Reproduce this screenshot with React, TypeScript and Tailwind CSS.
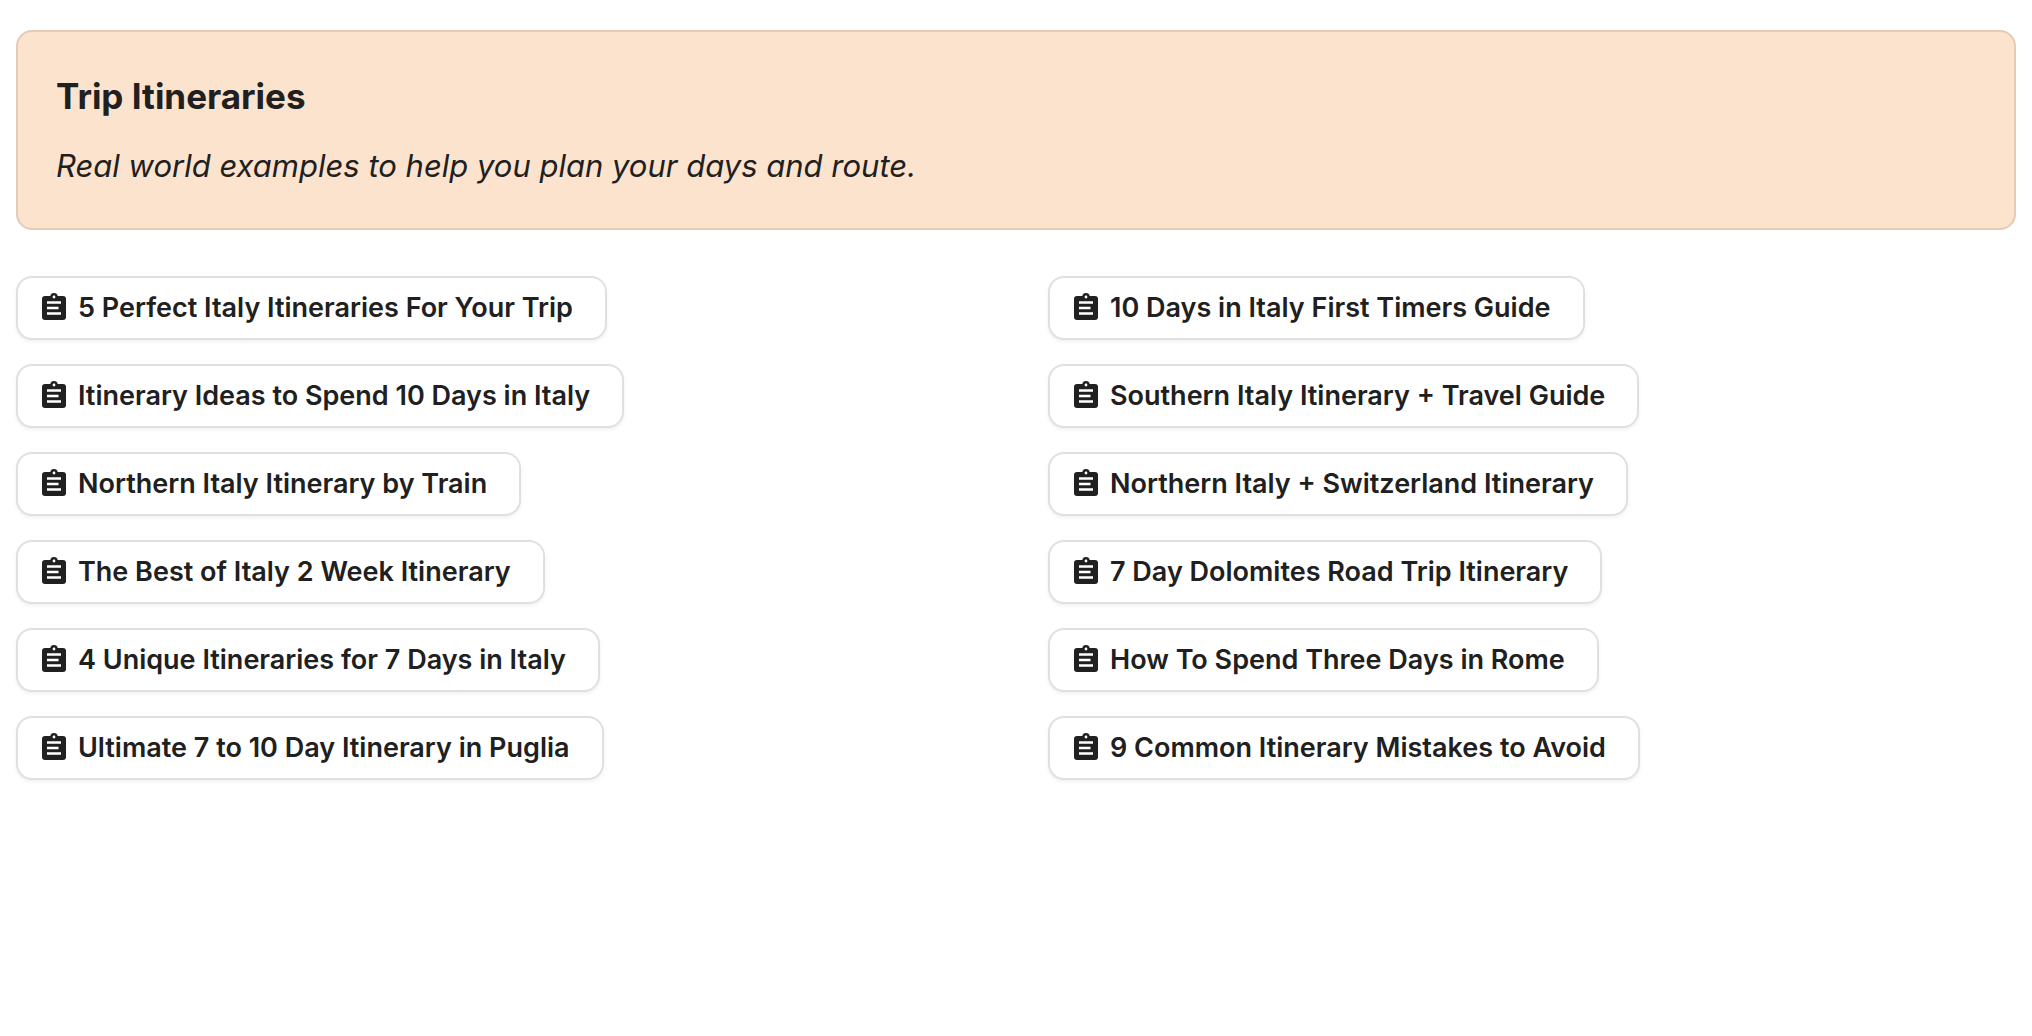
const columns = [
  [
    "5 Perfect Italy Itineraries For Your Trip",
    "Itinerary Ideas to Spend 10 Days in Italy",
    "Northern Italy Itinerary by Train",
    "The Best of Italy 2 Week Itinerary",
    "4 Unique Itineraries for 7 Days in Italy",
    "Ultimate 7 to 10 Day Itinerary in Puglia",
  ],
  [
    "10 Days in Italy First Timers Guide",
    "Southern Italy Itinerary + Travel Guide",
    "Northern Italy + Switzerland Itinerary",
    "7 Day Dolomites Road Trip Itinerary",
    "How To Spend Three Days in Rome",
    "9 Common Itinerary Mistakes to Avoid",
  ],
];

function ClipboardIcon() {
  return (
    <svg viewBox="0 0 32 32" className="size-8 shrink-0" aria-hidden="true">
      <rect x="4" y="4" width="24" height="24" rx="3" fill="currentColor" />
      <circle cx="16" cy="4.8" r="3.7" fill="currentColor" />
      <circle cx="16" cy="5" r="1.4" fill="white" />
      <path d="M9 10.5h14M9 16h11.5M9 21.5h14" stroke="white" strokeWidth="2.4" />
    </svg>
  );
}

function ItineraryLink({ title }: { title: string }) {
  return (
    <a
      href="#"
      className="flex h-16 items-center gap-2 rounded-2xl border-2 border-[#e0e0e0] bg-white pl-5 pr-8 text-[27px] font-semibold shadow-[0_2px_4px_rgba(0,0,0,0.06)]"
    >
      <ClipboardIcon />
      {title}
    </a>
  );
}

export default function App() {
  return (
    <main className="min-h-screen bg-white px-4 pt-[30px] font-['Inter',sans-serif] text-[#202020]">
      <header className="rounded-2xl border-2 border-[#e4cbb7] bg-[#fce3ce] px-[38px] py-10">
        <h1 className="text-[35px] leading-[48px] font-bold">Trip Itineraries</h1>
        <p className="mt-6 text-[31px] leading-[44px] italic">
          Real world examples to help you plan your days and route.
        </p>
      </header>

      <div className="mt-[46px] grid grid-cols-2 gap-16">
        {columns.map((titles, i) => (
          <nav key={i} className="flex flex-col items-start gap-6">
            {titles.map(title => (
              <ItineraryLink key={title} title={title} />
            ))}
          </nav>
        ))}
      </div>
    </main>
  );
}
